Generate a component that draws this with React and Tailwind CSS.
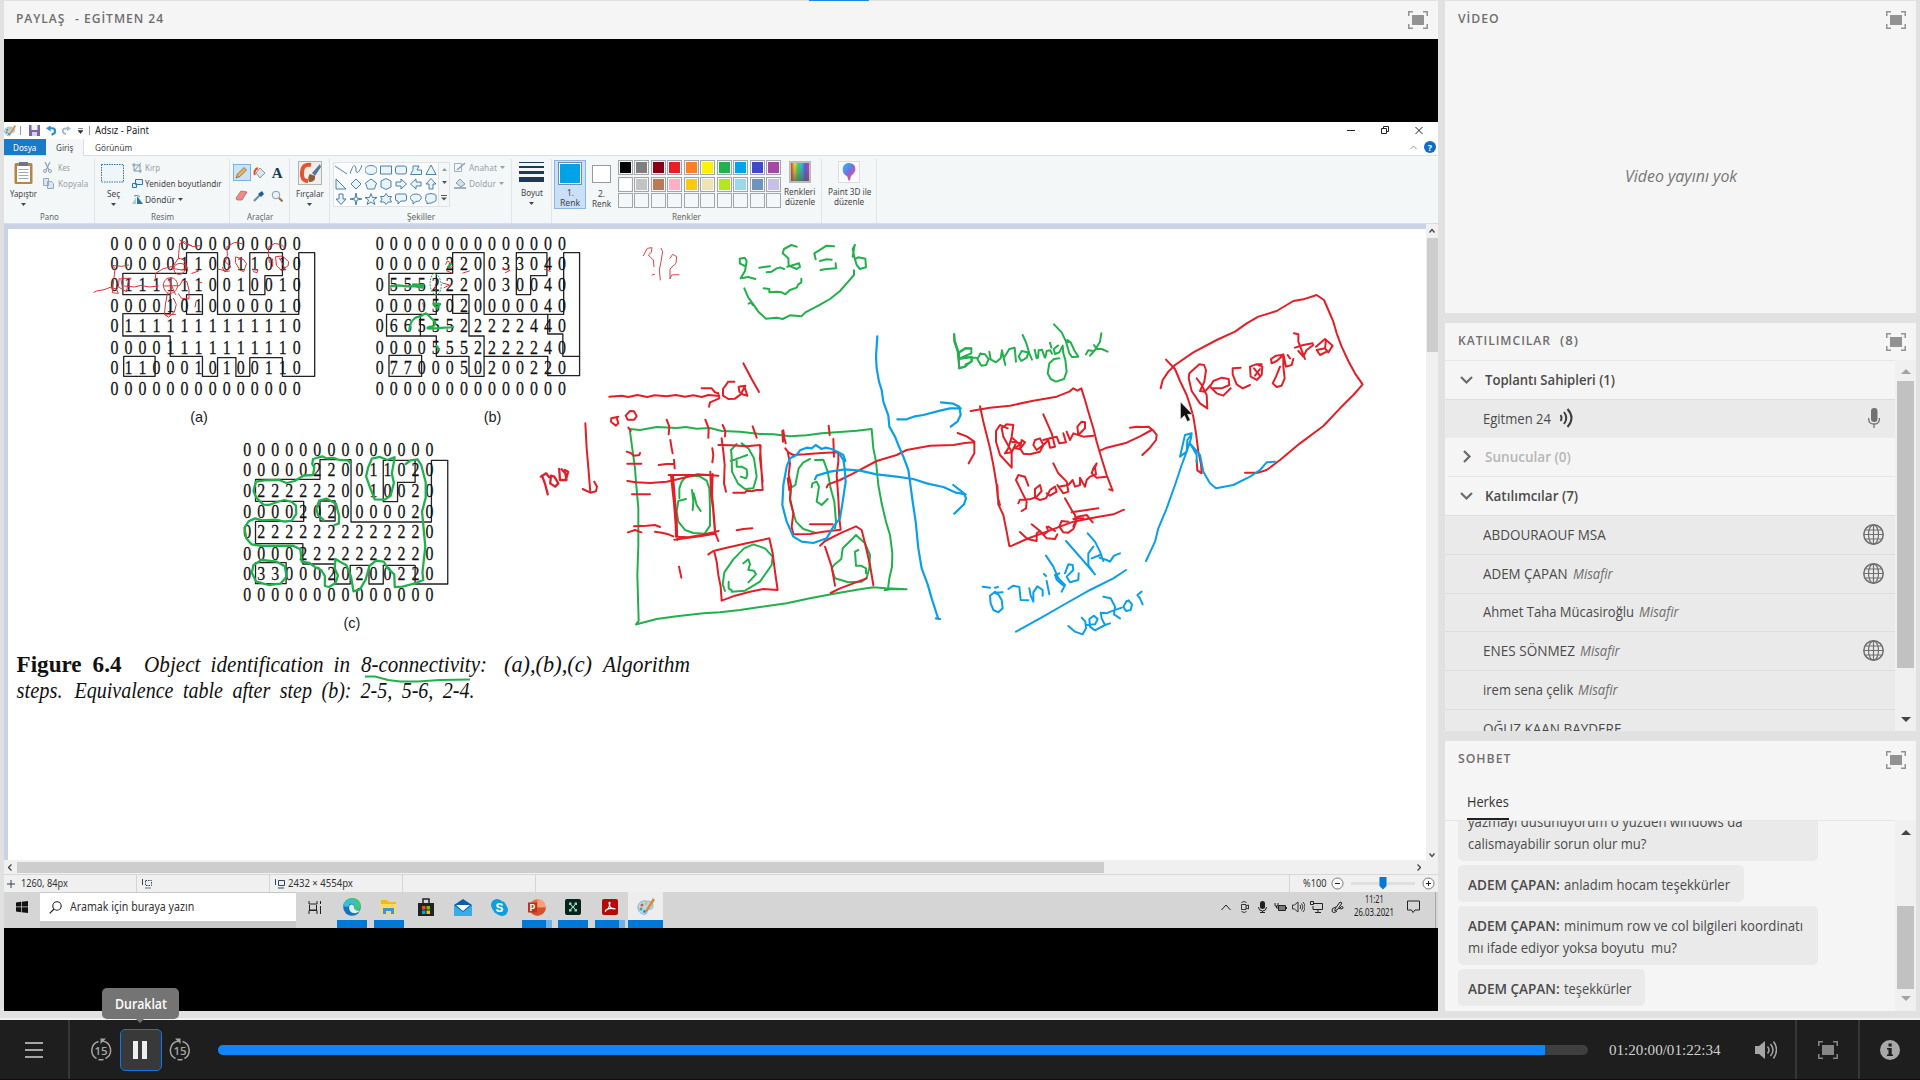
import React, { useLayoutEffect, useRef, useState } from "react";

const RED = "#e41e26";
const GREEN = "#22b04c";
const BLUE = "#0a9fe8";

/* Text set to a fixed measure, condensed or widened horizontally as needed. */
function Fit({ w, className = "", children }) {
  const ref = useRef(null);
  const [scale, setScale] = useState(1);
  useLayoutEffect(() => {
    setScale(w / ref.current.offsetWidth);
  }, [w]);
  return (
    <span className="inline-block shrink-0 text-left whitespace-pre" style={{ width: w }}>
      <span ref={ref} className={"inline-block origin-left " + className} style={{ transform: `scaleX(${scale})` }}>
        {children}
      </span>
    </span>
  );
}

function PodIcon({ className = "text-[#929292]" }) {
  return (
    <svg width="20" height="18" viewBox="0 0 20 18" className={className}>
      <rect x="4" y="4" width="12" height="10" fill="currentColor" />
      <path d="M.75 5V.75H5M15 .75h4.25V5M19.25 13v4.25H15M5 17.25H.75V13" fill="none" stroke="currentColor" strokeWidth="1.5" />
    </svg>
  );
}

/* ---------- Paint ribbon ---------- */

function Caret({ className = "" }) {
  return <svg width="5" height="3" viewBox="0 0 5 3" className={className}><path d="M0 0h5L2.500 3z" fill="currentColor" /></svg>;
}

function Group({ className, label, labelW, children }) {
  return (
    <div className={"flex h-[64px] flex-col items-center justify-between border-r border-[#e2e5e8] " + className}>
      <div className="w-full">{children}</div>
      <div className="h-[13px] text-[9.500px] leading-[14px] text-[#666]">{label && <Fit w={labelW}>{label}</Fit>}</div>
    </div>
  );
}

const shapes = [
  "M0 2 12 10", "M0 10C4 -3 6 2 6 6S9 10 12 1", "M6 1.500C14 1.500 14 10.500 6 10.500S-2 1.500 6 1.500Z", "M.5 2H11.500V10H.5Z",
  "M3 2H9Q11.500 2 11.500 4V8Q11.500 10 9 10H3Q.5 10 .5 8V4Q.5 2 3 2Z", "M3 2H9L7 6 11.500 6V10.500H.5L3 6Z", "M6 1 11 10.500H1Z",
  "M1 1V11H11Z", "M6 1 11 6 6 11 1 6Z", "M6 1 11.500 5 9.500 11H2.500L.5 5Z", "M6 .5 11 3V9L6 11.500 1 9V3Z",
  "M1 4H6V1L11.500 6 6 11V8H1Z", "M11 4H6V1L.5 6 6 11V8H11Z", "M4 11V6H1L6 .5 11 6H8V11Z",
  "M4 1V6H1L6 11.500 11 6H8V1Z", "M6 0 7 5 12 6 7 7 6 12 5 7 0 6 5 5Z", "M6 .5 7.500 4.500H12L8.500 7 10 11.500 6 9 2 11.500 3.500 7 0 4.500H4.500Z",
  "M6 .5 8 3.500H11.500L10 6 11.500 9H8L6 11.500 4 9H.5L2 6 .5 3.500H4Z", "M2 1H10Q11.500 1 11.500 3V6Q11.500 8 10 8H6L3 11V8H2Q.5 8 .5 6V3Q.5 1 2 1Z",
  "M6 1C13 1 13 8.500 6 8.500L3 11V8C-2 6 0 1 6 1Z", "M4 1Q6 0 8 1 12 1 11 5 12 9 8 9 6 11 4 10L2 11V9Q-1 7 1 4 0 1 4 1Z",
];

const palette = [
  "bg-[#000000]", "bg-[#7f7f7f]", "bg-[#880015]", "bg-[#ed1c24]", "bg-[#ff7f27]", "bg-[#fff200]", "bg-[#22b14c]", "bg-[#00a2e8]", "bg-[#3f48cc]", "bg-[#a349a4]",
  "bg-[#ffffff]", "bg-[#c3c3c3]", "bg-[#b97a57]", "bg-[#ffaec9]", "bg-[#ffc90e]", "bg-[#efe4b0]", "bg-[#b5e61d]", "bg-[#99d9ea]", "bg-[#7092be]", "bg-[#c8bfe7]",
  "", "", "", "", "", "", "", "", "", "",
];

function PaletteIcon({ className }) {
  return (
    <svg viewBox="0 0 18 18" className={className}>
      <path d="M9 3C3 2 0 7 1 11s5 6 8 5c2-1 0-3 2-4s5 0 5-4-3-5-7-5Z" fill="#b6d9ec" stroke="#6fa5c3" strokeWidth=".7" />
      <circle cx="5" cy="7" r="1.500" fill="#d65745" /><circle cx="9" cy="5.500" r="1.400" fill="#e7bd3c" /><circle cx="4" cy="11" r="1.500" fill="#52a86a" /><circle cx="7.500" cy="13.500" r="1.400" fill="#4976c8" />
      <path d="M16 0 8 13l2 1L18 2Z" fill="#d98a3a" />
    </svg>
  );
}

function TitleBar() {
  return (
    <div className="flex h-[17px] items-center bg-white">
      <PaletteIcon className="h-[12px] w-[12px]" />
      <i className="ml-[4px] h-[9px] w-px bg-[#999]" />
      <svg className="ml-[8px]" width="11" height="11" viewBox="0 0 11 11"><path d="M0 0h11v11H0z" fill="#7d63a8" /><path d="M2.500 0h6v5h-6z" fill="#f3effa" /><path d="M3 7h5v4H3z" fill="#d8cfe8" /></svg>
      <svg className="ml-[6px]" width="10" height="11" viewBox="0 0 11 11"><path d="M3 3h4q3 0 3 3.200T6 10" fill="none" stroke="#2d8fd6" strokeWidth="2.400" /><path d="M5 0v6.500L0 3z" fill="#2d8fd6" /></svg>
      <svg className="ml-[6px]" width="9" height="11" viewBox="0 0 11 11"><path d="M8 3H4Q1 3 1 6.200T5 10" fill="none" stroke="#a9b7c8" strokeWidth="2.400" /><path d="M6 0v6.500L11 3z" fill="#a9b7c8" /></svg>
      <svg className="ml-[7px] text-[#333]" width="5" height="6" viewBox="0 0 5 6"><path d="M0 .5h5M0 2.500h5L2.500 5.500z" fill="currentColor" stroke="currentColor" strokeWidth=".6" /></svg>
      <i className="ml-[6px] h-[9px] w-px bg-[#999]" />
      <span className="ml-[5px] text-[10.500px] leading-[17px] text-[#222]"><Fit w={54}>Adsız - Paint</Fit></span>
      <div className="ml-auto mr-[15px] flex items-center gap-[26px] text-[#222]">
        <svg width="8" height="9"><path d="M0 4.500h8" stroke="currentColor" /></svg>
        <svg width="8" height="9" viewBox="0 0 8 9"><path d="M.5 2.500h5v5h-5zM2.500 2.500v-2h5v5h-2" fill="none" stroke="currentColor" /></svg>
        <svg width="8" height="9" viewBox="0 0 8 9"><path d="m.5 1 7 7m0-7-7 7" stroke="currentColor" /></svg>
      </div>
    </div>
  );
}

function TabRow() {
  return (
    <div className="flex h-[17px] border-b border-[#dcdfe2] bg-white text-[9.500px] leading-[18px] text-[#444]">
      <div className="w-[42px] bg-[#1979ca] pl-[9px] text-white"><Fit w={23}>Dosya</Fit></div>
      <div className="h-[17px] w-[38px] border-r border-[#dcdfe2] bg-[#f5f6f7] pl-[10px]"><Fit w={17}>Giriş</Fit></div>
      <div className="pl-[11px]"><Fit w={37}>Görünüm</Fit></div>
      <div className="ml-auto mr-[2px] flex items-center gap-[7px]">
        <svg width="7" height="5" viewBox="0 0 7 5"><path d="m.5 4 3-3 3 3" fill="none" stroke="#999" /></svg>
        <span className="flex h-[12px] w-[12px] items-center justify-center rounded-full bg-[#0d6cc4] text-[9px] font-bold leading-none text-white">?</span>
      </div>
    </div>
  );
}

function Ribbon() {
  return (
    <div className="flex h-[68px] border-b border-[#d9dde1] bg-[#f4f7f8] pt-[3px] text-[9.500px] leading-[10px] text-[#444]">
      <Group className="w-[91px]" label="Pano" labelW={19}>
        <div className="flex pl-[6px]">
          <div className="flex w-[27px] flex-col items-center">
            <svg className="mt-[2px]" width="19" height="24" viewBox="0 0 19 24"><rect x=".5" y="2" width="18" height="21" rx="1.500" fill="#b98345" /><path d="M3 5h13v16H3z" fill="#fff" /><path d="M5 1h9v4H5z" fill="#6b7686" /><path d="M4.500 8.500h10m-10 3h10m-10 3h10m-10 3h10" stroke="#9cabb8" /></svg>
            <div className="mt-[4px]"><Fit w={27}>Yapıştır</Fit></div>
            <Caret className="mt-[4px]" />
          </div>
          <div className="ml-[6px] mt-[3px] flex flex-col gap-[5px] text-[#9a9fa5]">
            <div className="flex h-[11px] items-center"><svg width="9" height="11" viewBox="0 0 9 11"><path d="m2 0 4 8M7 0 3 8" stroke="#8fa2b6" strokeWidth="1.200" /><circle cx="2" cy="9" r="1.500" fill="none" stroke="#8fa2b6" /><circle cx="7" cy="9" r="1.500" fill="none" stroke="#8fa2b6" /></svg><span className="ml-[6px]"><Fit w={12}>Kes</Fit></span></div>
            <div className="flex h-[11px] items-center"><svg width="11" height="11" viewBox="0 0 11 11"><path d="M.5.5h5v7h-5zM4.500 3.500h4l2 2v5h-6z" fill="#dde5ee" stroke="#93a9c0" /></svg><span className="ml-[4px]"><Fit w={30}>Kopyala</Fit></span></div>
          </div>
        </div>
      </Group>
      <Group className="w-[135px]" label="Resim" labelW={23}>
        <div className="flex pl-[6px]">
          <div className="flex w-[24px] flex-col items-center">
            <svg className="mt-[5px]" width="24" height="19"><rect x=".5" y=".5" width="22" height="17.500" fill="#eef5fb" stroke="#33709f" strokeDasharray="1.500 1" /></svg>
            <div className="mt-[6px]"><Fit w={13}>Seç</Fit></div>
            <Caret className="mt-[4px]" />
          </div>
          <div className="ml-[7px] mt-[3px] flex flex-col gap-[5px]">
            <div className="flex h-[11px] items-center text-[#9a9fa5]"><svg width="10" height="10" viewBox="0 0 10 10"><path d="M2 0v8h8M0 2h8v8M2 8 9 0" fill="none" stroke="#7f93a8" /></svg><span className="ml-[3px]"><Fit w={15}>Kırp</Fit></span></div>
            <div className="flex h-[11px] items-center"><svg width="11" height="9" viewBox="0 0 11 9"><path d="M3.500.5h7v5h-7zM.5 4.500h4v4h-4z" fill="#dff0fb" stroke="#2c76ae" /></svg><span className="ml-[2px]"><Fit w={77}>Yeniden boyutlandır</Fit></span></div>
            <div className="flex h-[11px] items-center"><svg width="11" height="10" viewBox="0 0 11 10"><path d="M0 9 4 2v7z" fill="#aac8e0" /><path d="M5 9V1l6 8z" fill="#2675b4" /><path d="M2 1q4-2 6 1" fill="none" stroke="#3c8cc8" /></svg><span className="ml-[2px]"><Fit w={30}>Döndür</Fit></span><Caret className="ml-[3px]" /></div>
          </div>
        </div>
      </Group>
      <Group className="w-[60px]" label="Araçlar" labelW={26}>
        <div className="mt-[5px] grid h-[43px] grid-cols-3 grid-rows-2 pl-[3px] pr-[3px]">
          <div className="flex h-[17px] items-center justify-center border border-[#7fb1e3] bg-[#cce2f8]"><svg width="13" height="13" viewBox="0 0 13 13"><path d="m1 12 1.500-4L9 1.500 11.500 4 5 10.500Z" fill="#e9b64d" stroke="#77664a" strokeWidth=".8" /></svg></div>
          <div className="flex h-[17px] items-center justify-center"><svg width="13" height="13" viewBox="0 0 13 13"><path d="m7 2 5 5-5 5-4-5Z" fill="#d9e4ed" stroke="#6e8396" strokeWidth=".8" /><path d="M2 9Q0 4 5 2" fill="none" stroke="#df5425" strokeWidth="2" /></svg></div>
          <div className="flex h-[17px] items-center justify-center font-['Liberation_Serif',serif] text-[15px] font-bold text-[#1c3a5c]">A</div>
          <div className="flex h-[20px] items-center justify-center"><svg width="13" height="11" viewBox="0 0 13 11"><path d="m1 8 5-7 6 1-5 8H2Z" fill="#e98c8c" stroke="#bd6161" strokeWidth=".8" /></svg></div>
          <div className="flex h-[20px] items-center justify-center"><svg width="12" height="12" viewBox="0 0 12 12"><path d="m1 11 6-6" stroke="#668aa8" strokeWidth="2" /><path d="m5 4 3 3 3-3-2-3Z" fill="#205c99" /></svg></div>
          <div className="flex h-[20px] items-center justify-center"><svg width="12" height="12" viewBox="0 0 12 12"><circle cx="5" cy="5" r="3.800" fill="#e8f2f8" stroke="#8699a8" /><path d="m8 8 3.500 3.500" stroke="#a16e43" strokeWidth="2" /></svg></div>
        </div>
      </Group>
      <Group className="w-[40px]">
        <div className="flex flex-col items-center">
          <svg className="mt-[2px]" width="24" height="24" viewBox="0 0 24 24"><rect x=".5" y=".5" width="23" height="23" fill="#f0efee" stroke="#b3b3b3" /><path d="M13 4Q5 2 4 11t6 9" fill="none" stroke="#e6532a" strokeWidth="4" /><path d="m22 3-8 9 3 3 6-9" fill="#52789b" /><path d="M12 13q-3 3-1 8 7 0 6-6Z" fill="#8c5e39" /></svg>
          <div className="mt-[4px]"><Fit w={28}>Fırçalar</Fit></div>
          <Caret className="mt-[4px]" />
        </div>
      </Group>
      <Group className="w-[182px]" label="Şekiller" labelW={28}>
        <div className="flex pl-[3px] pt-[3px]">
          <div className="grid h-[45px] w-[106px] grid-cols-7 place-items-center border border-[#dfe3e8] bg-[#fafcfd]">
            {shapes.map((d, i) => (
              <svg key={i} width="12" height="12" viewBox="0 0 12 12"><path d={d} fill={i < 2 ? "none" : "#eaf4fb"} stroke="#3a73a0" strokeWidth=".9" /></svg>
            ))}
          </div>
          <div className="flex w-[11px] flex-col items-center justify-around border border-l-0 border-[#dfe3e8] text-[#555]">
            <Caret className="rotate-180 text-[#999]" /><Caret /><svg width="6" height="6" viewBox="0 0 6 6"><path d="M0 .5h6" stroke="currentColor" /><path d="M0 2.500h6l-3 3z" fill="currentColor" /></svg>
          </div>
          <div className="ml-[4px] flex flex-col gap-[5px] text-[#9a9fa5]">
            <div className="flex h-[11px] items-center"><svg width="12" height="11" viewBox="0 0 12 11"><path d="M.5 1.500h7v8h-7z" fill="none" stroke="#9eb0c1" /><path d="m3 8 8-7" stroke="#8ba0b5" strokeWidth="1.500" /></svg><span className="ml-[3px]"><Fit w={28}>Anahat</Fit></span><Caret className="ml-[3px]" /></div>
            <div className="flex h-[11px] items-center"><svg width="12" height="11" viewBox="0 0 12 11"><path d="m6 1 5 5-4 3-5-4Z" fill="#d3dfe9" stroke="#8299b0" /><path d="M0 10h12" stroke="#9cb0c4" strokeWidth="2" /></svg><span className="ml-[3px]"><Fit w={27}>Doldur</Fit></span><Caret className="ml-[3px]" /></div>
          </div>
        </div>
      </Group>
      <Group className="w-[40px]">
        <div className="flex flex-col items-center">
          <svg className="mt-[3px]" width="25" height="21"><path d="M0 .5h25" stroke="#1d3a59" /><path d="M0 5h25" stroke="#1d3a59" strokeWidth="2" /><path d="M0 10.500h25" stroke="#1d3a59" strokeWidth="3" /><path d="M0 17.500h25" stroke="#1d3a59" strokeWidth="5" /></svg>
          <div className="mt-[5px]"><Fit w={22}>Boyut</Fit></div>
          <Caret className="mt-[4px]" />
        </div>
      </Group>
      <Group className="w-[270px]" label="Renkler" labelW={29}>
        <div className="flex pl-[2px] pt-[1px] text-center">
          <div className="flex h-[49px] w-[32px] flex-col items-center border border-[#8ab6e4] bg-[#c9e0f7]">
            <div className="mt-[1px] h-[24px] w-[24px] border border-[#7b8d9c] bg-[#00a2e8] ring-1 ring-inset ring-white" />
            <div className="mt-[3px]"><Fit w={7}>1.</Fit></div><Fit w={20}>Renk</Fit>
          </div>
          <div className="flex w-[30px] flex-col items-center">
            <div className="mt-[5px] h-[18px] w-[19px] border border-[#999] bg-white" />
            <div className="mt-[6px]"><Fit w={7}>2.</Fit></div><Fit w={19}>Renk</Fit>
          </div>
          <div className="ml-[2px] grid h-[48px] w-[163px] grid-cols-10 gap-x-[1.500px] gap-y-[1.500px]">
            {palette.map((c, i) => (
              <div key={i} className="h-[15px] border border-[#a2a6aa] p-[1px]"><div className={"h-full w-full " + c} /></div>
            ))}
          </div>
          <div className="ml-[2px] flex w-[33px] flex-col items-center">
            <svg className="mt-[1px]" width="22" height="22" viewBox="0 0 22 22">
              <defs><linearGradient id="rb"><stop offset="0" stopColor="#e33" /><stop offset=".2" stopColor="#ed3" /><stop offset=".4" stopColor="#3d5" /><stop offset=".6" stopColor="#3bd" /><stop offset=".8" stopColor="#55e" /><stop offset="1" stopColor="#e3a" /></linearGradient><linearGradient id="dk" x2="0" y2="1"><stop offset="0" stopColor="#666" stopOpacity="0" /><stop offset="1" stopColor="#555" stopOpacity=".7" /></linearGradient></defs>
              <rect width="22" height="22" fill="#bbb" /><rect x="2" y="2" width="18" height="18" fill="url(#rb)" /><rect x="2" y="2" width="18" height="18" fill="url(#dk)" />
            </svg>
            <div className="mt-[4px]"><Fit w={31}>Renkleri</Fit></div><Fit w={30}>düzenle</Fit>
          </div>
        </div>
      </Group>
      <Group className="w-[55px]">
        <div className="flex flex-col items-center pt-[2px]">
          <svg width="22" height="22" viewBox="0 0 22 22">
            <defs><linearGradient id="p3" x1="0" x2="1" y2="1"><stop offset="0" stopColor="#24c6f4" /><stop offset=".45" stopColor="#6976e4" /><stop offset=".75" stopColor="#e14b9c" /><stop offset="1" stopColor="#ffb42c" /></linearGradient></defs>
            <rect x=".5" y=".5" width="21" height="21" fill="#fbfbfb" stroke="#ddd" /><path d="M11 2c8 0 8 9 3 12-2 1-1 5-3 6-1-1-1-3-2-5-6-2-6-13 2-13Z" fill="url(#p3)" />
          </svg>
          <div className="mt-[4px]"><Fit w={43}>Paint 3D ile</Fit></div><Fit w={30}>düzenle</Fit>
        </div>
      </Group>
    </div>
  );
}

/* ---------- Drawing canvas ---------- */

const Z = "00000000000000";
const gridA = [Z, "00000110011010", "01111110010010", "00001010000010", "01111111111110", "00001111111110", "01100010100110", Z];
const gridB = [Z, "00000220033040", "05552220030040", "00005020000040", "06655522222440", "00005552222240", "07700050200220", Z];
const gridC = [Z, "00000220011020", "02222220010020", "00002020000020", "02222222222220", "00002222222220", "03300020200220", Z];
const rowOffsets = [0, 20.7, 41.6, 62.4, 82.500, 103.900, 124.500, 145.300];

function Digits({ rows, x, y }) {
  return rows.map((row, r) =>
    row.split("").map((ch, c) => (
      <text key={r + "-" + c} transform={`translate(${x + c * 14.03} ${y + rowOffsets[r]}) scale(.86 1)`} textAnchor="middle">{ch}</text>
    ))
  );
}

const outlines = [
  "M301 145H457V83H533V268H732V83H771V454H692V398H612V454H578V398H533V454H496V394H417V333H301V266H417V209H301Z",
  "M303 394H380V454H303ZM457 209H496V268H457ZM612 83H692V152H649V209H612Z",
  "M953 145H1109V83H1186V268H1381V83H1420V452H1342V394H1186V454H1149V394H1069V333H947V268H1069V209H953Z",
  "M1069 145V209H1149V333H1186V394M1109 209V265H1149M1030 268V333M1342 268V327H1379V394H1420M1265 83H1340V152H1300V209H1265ZM953 391H1033V454H953Z",
  "M626 763H784V704H860V891H1057V706H1097V1077H1017V1021H939V1077H904V1021H858V1077H820V1017H742V956H626V889H744V829H626Z",
  "M626 1013H701V1076H626ZM784 828H821V888H784ZM939 706H1017V772H974V830H939Z",
];

const leftThinRed = [
  "M230 202 237 198 255 194 270 187 285 192 290 205 275 203 282 130 274 121 298 124 315 120",
  "M292 160 290 186 310 200 314 170 321 160 296 160 300 190 M305 183 330 186 345 181 365 186 388 183M384 182 384 190M380 168 382 144 400 131 424 124 437 100 440 56 452 50 472 65 488 62",
  "M437 100C455 100 462 120 450 142 436 158 420 140 428 122 435 112 458 110 460 138M440 45 455 58 470 62M422 130 446 135 460 128",
  "M400 180C402 150 436 150 435 184 430 212 402 214 400 180M418 158V212M402 183 440 182 448 165 458 170 463 195 463 222 445 220 437 206M412 160 430 208M410 206 405 240 403 268 413 277 427 262 432 238 425 220M405 270 430 268",
  "M470 145 487 138 482 135M486 175 494 172M480 232 478 246",
  "M533 132 555 138 566 125 552 111 557 90 556 65 575 52 592 56M578 96 596 103 604 116 597 140 588 135 577 113ZM545 127 550 140 562 138",
  "M620 132 632 136 630 143 621 140M660 112 657 85 659 65 674 55 690 60 698 70M676 95 692 93 707 110 706 122 690 136 678 122ZM685 100 698 130M668 102 668 124",
  "M1092 118 1096 108 1102 112 1098 129 1110 124M1094 137 1108 145M1134 144 1150 138M1084 174 1101 180 1088 188M1067 178 1068 198M1036 234 1038 247M1232 130 1250 136 1238 143M1334 133 1348 139",
];
const leftGreen = [
  "M956 184 976 181 996 184 1014 183 1035 188 1037 180 1012 178M1062 236 1078 237 1071 250 1063 240M1098 126 1105 117M1070 363 1076 374",
  "M1003 316C1004 294 1009 286 1018 278 1028 276 1035 272 1043 265 1051 268 1054 281 1065 288 1070 299 1061 306 1051 306 1040 313 1056 310 1070 310 1085 306 1096 310 1110 306",
  "M859 716 853 706 832 705 818 699 799 700 789 694 767 702 765 717 770 728 767 750 743 752 722 768 702 774 684 765 648 766 627 770 621 798 628 818 645 839 659 840 679 831 697 825 715 831 725 842 726 866 715 887 697 890 675 884 642 886 625 880 609 889 599 908 603 939 616 958 643 963 717 962 736 973 739 1010 758 1014 773 1027 787 1035 796 1053 796 1083 806 1086 822 1074 828 1052 820 1030 822 1002 833 1010 849 1021 860 1054 866 1099 882 1093 896 1063 905 1023 921 1007 940 1010 951 1031 966 1048 967 1086 986 1085 1017 1075 1037 1065 1035 1042 1042 965 1034 860 1043 818 1043 772 1032 720 1023 703 1006 706 994 717",
  "M966 697 949 705 931 696 911 701 902 727 897 754 906 786 918 823 942 824 957 812 965 774 960 745 967 697M819 900 830 896 831 873 823 836 801 821 782 827 775 850 779 870 793 885",
  "M641 1005 621 1020 617 1043 627 1069 658 1080 687 1076 702 1055 698 1024 678 1010Z",
];

/* Strokes in the middle of the sheet. */
const midRed = [
  "M148 515 185 512 205 516 232 510 262 516 284 511 320 514 348 510 375 515 400 511 425 516 445 510 478 513M425 490 455 490 465 502 475 505 478 520 450 532 447 545",
  "M523 470 505 470 489 492 489 512 505 522 525 521 542 508 556 482 536 485 538 500 548 508 562 512 555 490M550 415 575 462 597 501",
  "M175 575 154 580 153 590 168 602 175 595 170 578M210 558 197 572 203 584 223 584 230 573 222 559Z",
  "M76 595 80 670 86 740 91 802M68 792 91 803 108 799 111 785 103 770",
  "M205 608 212 618M320 584 328 605 326 628M436 584 446 610 445 638M488 600 496 618 495 634M578 604 590 638M670 616 673 638 677 655M667 618 669 650M806 602 809 630",
  "M200 680 212 684 222 692 238 690 240 684M202 716H244M202 768 228 772 270 774 320 770 385 755 412 748 475 752M216 808H270M222 904 260 902 285 900 300 906M204 922 225 915 244 922M285 920 305 923 325 928 340 934",
  "M331 645 335 670 338 685M342 704 344 730M296 720 320 717 342 716M457 670 460 690 457 712M357 1025 364 1058M530 916 550 912 577 910",
  "M326 750 445 750M339 752 347 850 350 890 352 945M333 752 342 835 347 900 348 935 385 937 425 930 476 918M343 944 380 939 430 932 464 926M451 740 452 770 453 810 459 850 465 925M458 747 456 810 460 850 466 925 475 948",
  "M475 660 515 661 560 664 600 660 608 795 590 795 575 799 560 797 555 803 520 803M485 640 490 680 494 720 492 775 498 800M602 662 600 700 608 770",
  "M676 670 685 682 700 690 735 688 785 684 835 682 835 710 830 750 835 820 838 880 842 914 790 920 750 927 700 928 695 905 700 865 690 820 693 780 686 750 690 715 683 680M820 642 822 695M683 760 688 795M750 898H818",
  "M445 988 460 978 500 968 560 955 628 940 638 985 645 1040 653 1095 610 1092 570 1100 525 1112 485 1127 482 1085 475 1050 470 1010 463 980",
  "M780 962 795 948 840 925 888 904 905 915 915 955 930 1020 940 1080M795 965 815 1025 825 1082M812 1104 840 1090 920 1060",
  "M800 787 805 778 840 765 880 745 950 708 1010 690 1040 675 1110 662 1180 660 1215 654 1240 652M1193 624 1220 634 1243 650 1243 685 1226 715",
];
const midGreen = [
  "M555 123 540 116 539 101 554 98 560 108 555 138 542 160 565 156 586 162M598 128 630 124M620 142 635 140 650 130 660 127 672 132",
  "M710 65 694 60 672 72 668 85 685 100 686 122 710 132 720 126 717 115 700 120 682 125M822 64 800 62 763 85 767 103M780 108 800 103 815 104M782 135 800 132 828 130 827 115M885 60 878 72 884 100 890 120 900 132 918 127 916 101 895 97 885 102M884 60 878 95",
  "M611 190 628 192 628 202 650 200 665 202 676 208 690 195 710 188 715 178 724 172 724 161M553 190 565 218 580 238 595 260 618 281 650 278 668 282 690 271 724 274 736 262 775 242 810 222 840 198 860 175 882 150V136M566 236 574 232 578 240",
  "M210 612 240 615 290 606 350 609 378 606 410 611 450 609 485 618 540 620 600 627 640 628 690 634 740 631 785 625 850 620 890 617 935 612 940 670 948 710 955 780 965 835 978 890 990 930 997 985 996 1025 988 1060 984 1092M974 1096 990 1093 1040 1093 978 1090 940 1087 900 1093 830 1105 750 1120 680 1135 600 1146 540 1155 480 1162 430 1165 350 1174 290 1182 230 1198M228 1198 236 1188 232 1050 235 960 235 850 228 770 225 730 210 620",
  "M382 750 365 770 358 790 358 820M378 822 355 828 350 860 355 890 375 915 400 924 434 926 450 902 450 850 448 790 440 767 415 752 382 753M396 795 400 830 398 855M401 805 410 840 422 858",
  "M530 657 513 675 515 695 516 740 534 776 555 792 580 790 590 755 582 700 565 670 545 655M525 704 512 707M530 708 530 725 545 725 560 733 562 750 558 760 542 755M528 702 540 698 562 690",
  "M750 702 730 712 716 730 706 780 693 788 690 828 708 890 730 912 765 923M765 705 790 704 803 740 812 790 823 830 828 890 825 910M755 787 757 775 770 770 777 785 770 830 785 840 803 822",
  "M515 1100 555 1097 600 1070 635 1020 638 995 615 970 580 958 552 970 520 1003 493 1042 488 1078 495 1098M506 1070 506 1090 515 1096M550 1015 565 1003 570 1017 565 1035 582 1037 588 1048 565 1072",
  "M888 930 876 943 848 970 844 1002 822 1020 815 1030 825 1060 865 1072 905 1070 920 1058 928 1030 930 990 915 955 888 930M895 975 885 980 888 1022 903 1022 918 1030 918 1045",
  "M1182 328 1183 350 1193 380 1198 430 1215 425 1217 418 1235 410 1235 396 1198 402 1197 382 1217 370 1234 370",
];
const midBlue = [
  "M952 334 948 395 950 430 957 470 965 495 970 530 985 572 988 605 1005 635 1017 665 1030 695 1045 735 1050 770 1058 830 1067 890 1075 970 1085 1030 1103 1078 1115 1120 1135 1182M1128 1180 1140 1182",
  "M1012 583H1040L1065 574 1090 570 1140 557 1170 550 1202 550M1143 532 1180 536 1198 545 1202 570 1192 590 1172 605",
  "M765 763 770 752 810 740 855 733 900 737 950 748 1010 755 1060 762 1100 775 1150 786 1185 802 1217 808M1180 780 1212 805 1218 820 1212 838 1183 866",
  "M856 708 850 690 835 682 815 672 797 668 785 672 767 660 755 670 740 668 720 676 710 690 690 700 680 725 670 780 667 840 680 890 700 935 725 950 760 954 800 940 820 905 840 880 848 830 857 770 854 730 850 705 840 690",
];

/* Strokes on the right part of the sheet. */
const rightGreen = [
  "M43 328 44 345 55 380 58 430 75 425 95 408 94 396 60 400M58 382 75 370 94 371 94 385 75 393 60 400M95 398 108 398M122 385 112 402 124 422 138 420 146 402 135 388 120 386M148 380 152 403 168 412 182 400 186 376 190 395 196 420M192 398 208 372 224 368 228 410",
  "M262 382 245 378 236 395 244 408 260 398 266 380M248 330 258 352 268 385 276 404M284 374 290 400M294 398 296 376 306 374 314 397M316 398 320 378 331 376 336 386M330 353 334 368",
  "M354 362 341 372 345 387 358 382 368 362 370 385 376 405 380 440 372 462 348 470 332 462 323 445 328 415 342 402 358 400",
  "M342 298 365 322 378 350 388 385 396 396M385 352 382 345 392 352 404 378 415 395 396 396M438 388 445 376 460 378M462 360 470 372 485 372 503 380M484 325 480 350 465 375 450 392",
];
const rightRed = [
  "M92 558 150 548 210 542 280 527 350 515 388 500 400 490 412 497 424 490 435 525 445 560 460 610 470 650 480 685 500 750 518 797 508 793M120 544 130 590 150 670 160 720 170 780 173 815 180 840M172 780 175 838 190 870 200 920 208 963 216 962 260 942 320 920 400 890 460 878 520 868 552 854",
  "M203 610 180 600 168 618 168 650 180 690 215 728 215 680 190 635 185 610 200 598 220 600 215 635 205 670 195 685 215 682 230 650 218 640M215 650 243 655 225 670 240 672 255 652 245 645 240 670 250 686 270 688 300 680 310 660 300 640 285 645 280 660 290 675 310 660 325 645 330 668 345 665 335 625 310 568M310 645 330 640 350 635M350 635 358 655 378 652 370 625M380 620 390 645 400 625 415 630 435 610 435 592 425 590 412 605 415 630 430 635 460 632",
  "M265 782 255 755 235 750 228 765 245 800 260 830 258 850 245 858M235 835 240 824 270 823 290 815 305 798 300 780 285 792 285 818 300 825 318 820 330 795 345 785 350 800 330 812 320 805M340 715 355 745 380 770 385 800 370 805 352 780M355 785 385 780 398 765 405 785 420 780 420 758 435 785 440 765 450 755 468 748 465 728 470 715 460 730 455 745 470 758 500 755",
  "M240 921 262 942 290 948 290 925 300 918M275 898 300 918 320 940 345 942 352 928M320 905 325 918 310 930M325 905 345 918M385 890 365 888 358 905 370 922 385 923 400 912 408 892 405 870 395 855 375 820M400 905 412 875 440 870 458 892M400 882 430 880M395 862 440 855 475 850",
  "M480 677 500 668 560 653 600 634 635 615M570 608 590 605 605 606 625 605 638 615 650 630 648 645 630 668 607 690",
  "M662 490 668 465 685 440 705 420 760 382 830 345 885 320 920 295 955 275 1010 258 1060 228 1090 223 1130 210 1152 225 1165 255 1180 290 1190 325 1205 365 1225 408 1245 445 1268 478 1240 510 1200 550 1150 603 1080 655 1020 705 980 735 955 743 915 743",
  "M678 404 705 432 720 468 740 510 750 540 760 575 768 625 775 680 783 718 785 745 772 736 770 705",
  "M792 420 778 418 748 445 746 460 755 498 780 535 802 550 800 510 785 480 770 460M792 420 798 435 793 470 780 498 795 500 812 480M818 490 845 490 868 480 866 462 845 458 820 468 810 485 830 505 850 512 872 490M902 428 878 430 878 448 890 478 908 490 930 480M965 418 948 418 930 425 932 455 950 465 965 450 967 425 950 418M942 430 958 450M945 452 960 432",
  "M1025 390 1008 392 993 402 995 415 1010 408 1030 390 1030 425 1034 460 1025 482 1010 486 998 475 1008 455 1020 425M1030 388 1038 425 1055 420 1060 402M1043 390 1050 400M1062 325 1075 328 1075 350 1095 402M1065 368 1090 360 1118 355M1075 378 1090 395 1100 375 1120 360M1128 365 1140 355 1155 342 1178 362 1165 382 1155 370 1130 375 1140 390 1160 380M1158 345 1155 370",
];
const rightBlue = [
  "M618 1008 645 950 655 910 680 850 705 780 725 720 740 680 753 640 755 625 735 630 720 695 740 680 742 645 753 630M750 655 770 690 770 712M750 655 780 690 790 740 810 775 828 790 880 780 930 755 960 735 980 712 1005 710",
  "M128 1085 150 1088M165 1088 174 1086M165 1100 150 1112 152 1135 160 1155 175 1162 188 1150 185 1125 175 1108 162 1103 188 1102M205 1092 220 1082 238 1086 242 1125 265 1126M268 1090 272 1112 280 1130 280 1102 292 1084 308 1095 308 1112M320 1068 328 1108M312 1047 318 1053M318 992 340 1025 355 1060 375 1080 365 1100M358 1045 345 1050 350 1064 368 1080M375 1045 385 1018 398 1020 400 1035 380 1055 390 1072 415 1065 416 1045",
  "M378 948 415 990 445 1025 465 1048M460 965 445 985 445 1020 462 1045M443 925 465 950 480 980 490 1008M455 1000 480 990M478 998 500 1005 510 1010 522 992 540 985",
  "M228 1220 300 1180 370 1140 450 1095 520 1060 558 1035",
  "M385 1203 405 1220 428 1228 438 1210 436 1190 425 1178M440 1200 465 1198 473 1182 462 1172 448 1182 450 1205 465 1216 495 1200M502 1165 482 1163 485 1180 495 1200 510 1195M490 1115 512 1120 525 1145 522 1168 540 1180M505 1162 545 1148M560 1128 550 1145 558 1158 572 1155 576 1138 566 1126 558 1130M605 1100 592 1110 600 1120 608 1138",
];

function Ink({ paths, color, width = 2 }) {
  return paths.map((d, i) => (
    <path key={i} d={d} fill="none" stroke={color} strokeWidth={width} strokeLinecap="round" strokeLinejoin="round" vectorEffect="non-scaling-stroke" />
  ));
}

const caption = [
  [16.500, 672, 105, "Figure 6.4", true], [144, 672, 206, "Object identification in"], [361, 672, 126, "8-connectivity:"],
  [504, 672, 88, "(a),(b),(c)"], [603, 672, 87, "Algorithm"], [16.500, 698, 46, "steps."],
  [74.500, 698, 277, "Equivalence table after step (b):"], [360.500, 698, 114, "2-5, 5-6, 2-4."],
];

function Canvas() {
  return (
    <svg viewBox="8 229 1418 631" className="h-[631px] w-[1418px] bg-white">
      <g transform="translate(0 225) scale(.40816 .33333)"><Ink paths={outlines} color="#222" width={1.300} /></g>
      <g fontFamily="'Liberation Serif', serif" fontSize="18.500" fill="#111" stroke="#111" strokeWidth=".25">
        <Digits rows={gridA} x={114.400} y={249.600} />
        <Digits rows={gridB} x={379.700} y={249.600} />
        <Digits rows={gridC} x={247.200} y={455.600} />
      </g>
      <g fontFamily="'Liberation Sans', sans-serif" fontSize="14.500" fill="#222" textAnchor="middle">
        <text x="199" y="421.500">(a)</text><text x="492.500" y="421.500">(b)</text><text x="352" y="627.500">(c)</text>
      </g>
      <g fontFamily="'Liberation Serif', serif" fontSize="22.500" wordSpacing="5" fill="#111">
        {caption.map(([x, y, w, t, bold]) => (
          <text key={t} x={x} y={y} textLength={w} lengthAdjust="spacingAndGlyphs" fontStyle={bold ? "normal" : "italic"} fontWeight={bold ? "700" : "400"}>{t}</text>
        ))}
      </g>
      <path d="M365 676.500H375L388 680 400 681.500H418L440 680 470 679.500" fill="none" stroke={GREEN} strokeWidth="2" />
      <g transform="translate(0 225) scale(.40816 .33333)">
        <Ink paths={leftThinRed} color="#dc3138" width={1} />
        <Ink paths={leftGreen} color={GREEN} width={2.300} />
        <path d="M1063 145C1048 160 1052 205 1068 210 1088 205 1084 150 1063 145Z" fill="none" stroke={GREEN} strokeWidth="1" vectorEffect="non-scaling-stroke" strokeDasharray="2 1" />
        <Ink paths={["M1328 752 1335 775 1342 808M1325 755 1338 745 1345 756M1350 752 1348 775 1360 785 1368 775 1358 755 1350 752M1370 732 1372 765 1388 765 1385 745 1376 733M1384 735 1392 740 1388 758"]} color={RED} width={2.300} />
      </g>
      <g transform="translate(560 225) scale(.33333)">
        <Ink paths={["M250 92 262 70 276 68 274 82 265 90 280 105 282 125M276 150 284 148M303 70 308 80 303 110 298 135 301 165M330 100 338 88 350 95 348 115 330 132 330 162 335 150 357 149"]} color="#d6454b" width={1} />
        <Ink paths={midGreen} color={GREEN} /><Ink paths={midRed} color={RED} /><Ink paths={midBlue} color={BLUE} width={2.200} />
      </g>
      <g transform="translate(940 225) scale(.33333)">
        <Ink paths={rightGreen} color={GREEN} /><Ink paths={rightRed} color={RED} /><Ink paths={rightBlue} color={BLUE} />
      </g>
      <path d="M1180.500 402v17l4-3.500 2.800 6 3-1.400-2.800-5.800h5z" fill="#111" stroke="#ddd" strokeWidth=".6" />
    </svg>
  );
}

function StatusBar() {
  return (
    <div className="flex h-[18px] items-center border-t border-[#d8d8d8] bg-[#f0f0f0] text-[10px] leading-[17px] text-[#333]">
      <div className="flex h-full w-[133px] items-center border-r border-[#d5d5d5]"><svg className="ml-[3px]" width="8" height="8" viewBox="0 0 8 8"><path d="M4 0v8M0 4h8" stroke="#345" /></svg><span className="ml-[6px]"><Fit w={47}>1260, 84px</Fit></span></div>
      <div className="flex h-full w-[133px] items-center border-r border-[#d5d5d5]"><svg className="ml-[4px]" width="11" height="10" viewBox="0 0 11 10"><path d="M1.500 0v6" stroke="#345" /><path d="M4.500 1.500h6v5h-6z" fill="none" stroke="#345" strokeDasharray="1.500 1" /><path d="M4 9h6" stroke="#678" /></svg></div>
      <div className="flex h-full w-[133px] items-center border-r border-[#d5d5d5]"><svg className="ml-[4px]" width="11" height="10" viewBox="0 0 11 10"><path d="M1.500 0v6M4 9h6" stroke="#345" /><path d="M4.500 1.500h6v5h-6z" fill="none" stroke="#345" /></svg><span className="ml-[3px]"><Fit w={65}>2432 × 4554px</Fit></span></div>
      <div className="h-full w-[133px] border-r border-[#d5d5d5]" />
      <div className="ml-auto flex h-full w-[149px] items-center border-l border-[#d5d5d5] pl-[13px]">
        <Fit w={23}>%100</Fit>
        <svg className="ml-[5px]" width="13" height="13" viewBox="0 0 13 13"><circle cx="6.500" cy="6.500" r="5.500" fill="#fff" stroke="#777" /><path d="M4 6.500h5" stroke="#222" /></svg>
        <svg className="ml-[7px]" width="64" height="13" viewBox="0 0 64 13"><path d="M0 5h64v3H0z" fill="#dfdfdf" /><path d="M28.500 0h7v9L32 12.500 28.500 9z" fill="#0078d7" /></svg>
        <svg className="ml-[7px]" width="13" height="13" viewBox="0 0 13 13"><circle cx="6.500" cy="6.500" r="5.500" fill="#fff" stroke="#777" /><path d="M4 6.500h5M6.500 4v5" stroke="#222" /></svg>
      </div>
    </div>
  );
}

function Task({ className = "", bar = "", children }) {
  return (
    <div className={"flex h-[36px] flex-col items-center justify-between " + className}>
      <div className="flex h-[28px] items-center justify-center pt-[2px]">{children}</div>
      <div className={"h-[8px] " + bar} />
    </div>
  );
}

function Taskbar() {
  return (
    <div className="flex h-[36px] bg-[#d5d5d5]">
      <div className="flex w-[36px] justify-center pt-[9px]"><svg width="12" height="12" viewBox="0 0 12 12"><path d="m0 1.500 5-.7v4.800H0zM5.700.7 12 0v5.600H5.700zM0 6.300h5v4.900l-5-.7zM5.700 6.300H12V12l-6.300-.8z" fill="#111" /></svg></div>
      <div className="w-[256px] bg-[#c8c8c8] pt-px">
        <div className="flex h-[28px] items-center bg-white text-[12px] text-[#333]">
          <svg className="ml-[9px]" width="13" height="13" viewBox="0 0 13 13"><circle cx="8" cy="5" r="4.200" fill="none" stroke="#222" strokeWidth="1.100" /><path d="M5 8 .7 12.300" stroke="#222" strokeWidth="1.200" /></svg>
          <span className="ml-[8px]"><Fit w={124}>Aramak için buraya yazın</Fit></span>
        </div>
      </div>
      <Task className="w-[37px]"><svg width="14" height="13" viewBox="0 0 14 13"><path d="M1 0v3M9 0v3M1 3h8M1 9.500h8M1 13V9.500M9 13V9.500M1.500 4v5h7V4M12.500 0v3M12.500 5v8" fill="none" stroke="#222" /></svg></Task>
      <Task className="w-[37px]" bar="w-[30px] bg-[#0078d7]"><svg width="18" height="18" viewBox="0 0 18 18"><circle cx="9" cy="9" r="8.800" fill="#1473bd" /><path d="M0 8C2-2 17-3 18 8c0 5-6 5-7 3 2-6-5-8-11-3Z" fill="#41c77b" /><path d="M0 8c3-8 13-8 14-1-4-3-8-2-9 2Z" fill="#37bce6" /><path d="M6 10c0-5 6-4 5 0 1 3 4 3 6 2-2 4-10 5-11-2Z" fill="#dff2f7" /></svg></Task>
      <Task className="w-[37px]" bar="w-[30px] bg-[#0078d7]"><svg width="17" height="16" viewBox="0 0 17 16"><path d="M1 1h6l2 2h7v11H1z" fill="#f4b81d" /><path d="M1 5h15v10H1z" fill="#ffd95c" /><path d="M3 15V9h11v6h-3v-3H6v3z" fill="#3e94d6" /></svg></Task>
      <Task className="w-[37px]"><svg width="18" height="18" viewBox="0 0 18 18"><path d="M6 5V1h6v4" fill="none" stroke="#222" strokeWidth="1.500" /><path d="M1 5h16v13H1z" fill="#222" /><path d="M5 8h3.500v3.500H5z" fill="#f25022" /><path d="M9.500 8H13v3.500H9.500z" fill="#7fba00" /><path d="M5 12.500h3.500V16H5z" fill="#00a4ef" /><path d="M9.500 12.500H13V16H9.500z" fill="#ffb900" /></svg></Task>
      <Task className="w-[37px]"><svg width="18" height="17" viewBox="0 0 18 17"><path d="m0 6 9-6 9 6v10H0z" fill="#0a5fa8" /><path d="m2 6 14 0-7 6z" fill="#fff" /><path d="m0 6 9 7 9-7v11H0z" fill="#35aee8" /></svg></Task>
      <Task className="w-[37px]"><svg width="17" height="17" viewBox="0 0 17 17"><circle cx="6" cy="6" r="6" fill="#0b9fdf" /><circle cx="11" cy="11" r="6" fill="#0b9fdf" /><circle cx="8.500" cy="8.500" r="7" fill="#0b9fdf" /><text x="8.500" y="12.700" textAnchor="middle" fontFamily="Inter, sans-serif" fontSize="12" fontWeight="700" fill="#fff">S</text></svg></Task>
      <Task className="w-[37px]" bar="w-[30px] border-r-[6px] border-[#6fb0e6] bg-[#0078d7]"><svg width="18" height="17" viewBox="0 0 18 17"><circle cx="9.500" cy="8.500" r="8.300" fill="#ed6c47" /><path d="M9.500.2a8.300 8.300 0 0 1 8.300 8.300H9.500z" fill="#ff9d79" /><path d="M9.500 8.500h8.300a8.300 8.300 0 0 1-16 3z" fill="#c43e1c" opacity=".6" /><path d="M0 3.500h9v10H0z" fill="#b73518" /><text x="4.500" y="11.700" textAnchor="middle" fontFamily="Inter, sans-serif" fontSize="8.500" fontWeight="700" fill="#fff">P</text></svg></Task>
      <Task className="w-[36px]" bar="w-[30px] bg-[#0078d7]"><svg width="16" height="16" viewBox="0 0 16 16"><rect width="16" height="16" rx="2" fill="#08231c" /><path d="M4 3.500h2.500v2.500H4zM9.500 3.500H12v2.500H9.500zM4 10h2.500v2.500H4zM9.500 10H12v2.500H9.500zM6.700 6.700h2.600v2.600H6.700z" fill="#8bd9b2" /><path d="m5 5 6 6M11 5l-6 6" stroke="#8bd9b2" /></svg></Task>
      <Task className="w-[37px]" bar="w-[30px] border-r-[6px] border-[#6fb0e6] bg-[#0078d7]"><svg width="16" height="16" viewBox="0 0 16 16"><rect width="16" height="16" rx="2" fill="#b30b00" /><path d="M3 12c3-1 5-5 5-8 0-1-1-1-1 0 0 4 3 6 6 6 1-1-7-1-9 1-1 1-1 2 0 1" fill="none" stroke="#fff" strokeWidth="1.100" /></svg></Task>
      <Task className="w-[35px] bg-[#ededed]" bar="w-[35px] bg-[#0078d7]"><PaletteIcon className="h-[18px] w-[18px]" /></Task>
      <div className="ml-auto flex items-start text-[#222]">
        <svg className="mt-[12px]" width="10" height="7" viewBox="0 0 10 7"><path d="m.5 6 4.500-5 4.500 5" fill="none" stroke="currentColor" /></svg>
        <svg className="ml-[9px] mt-[9px]" width="9" height="12" viewBox="0 0 9 12"><path d="M1.500 3.500h4.500v5H1.500zM6 5l2.500-1v4L6 7M1.500 1.500q3-2 5 0M1.500 10.500q3 2 5 0" fill="none" stroke="currentColor" strokeWidth=".9" /></svg>
        <svg className="ml-[9px] mt-[9px]" width="9" height="12" viewBox="0 0 9 12"><rect x="2" y="0" width="5" height="8" rx="2.500" fill="currentColor" /><path d="M.5 6q0 4 4 4t4-4M4.500 10v2M2 11.500h5" fill="none" stroke="currentColor" /></svg>
        <svg className="ml-[7px] mt-[10px]" width="13" height="10" viewBox="0 0 13 10"><path d="M4.500 3.500h7v5h-7z" fill="#777" stroke="currentColor" /><path d="M12.500 5v2M1 1v3h3V1M2.500 4v2h2" fill="none" stroke="currentColor" /></svg>
        <svg className="ml-[5px] mt-[9px]" width="13" height="12" viewBox="0 0 13 12"><path d="M.5 4h2L6 1v10L2.500 8h-2zM8 4q1.500 2 0 4M9.500 2.500q3 3.500 0 7M11 1q4 5 0 10" fill="none" stroke="currentColor" strokeWidth=".9" /></svg>
        <svg className="ml-[5px] mt-[9px]" width="13" height="12" viewBox="0 0 13 12"><path d="M4 2.500h8.500v6H3V5M8 9v2M5 11.500h6M.5.5h3v3h-3z" fill="none" stroke="currentColor" /></svg>
        <svg className="ml-[8px] mt-[9px]" width="13" height="12" viewBox="0 0 13 12"><path d="m4 8 5-7 2 1-4 6-3 2zM5 6Q0 7 1 10t5 0M8 8q3-4 4-2t-3 2" fill="none" stroke="currentColor" /></svg>
        <div className="ml-[9px] flex w-[42px] flex-col items-center text-[10px] leading-[13px]"><div className="mt-px"><Fit w={19}>11:21</Fit></div><Fit w={40}>26.03.2021</Fit></div>
        <svg className="ml-[12px] mt-[8px]" width="13" height="13" viewBox="0 0 13 13"><path d="M.5 1h12v9H8l-2 2.500L4.500 10h-4z" fill="none" stroke="currentColor" /></svg>
        <i className="ml-[15px] mr-[2px] h-[36px] w-px bg-[#aaa]" />
      </div>
    </div>
  );
}

function Paint() {
  return (
    <div className="flex h-[806px] flex-col bg-[#f0f0f0] font-['Noto_Sans',sans-serif]">
      <TitleBar />
      <TabRow />
      <Ribbon />
      <div className="flex h-[636px]">
        <div className="w-[1422px] border-l-[4px] border-t-[5px] border-[#c9d3e3]"><Canvas /></div>
        <div className="flex w-[12px] flex-col items-center pb-px">
          <svg className="mt-[4px]" width="6" height="5" viewBox="0 0 6 5"><path d="m.5 4.500 2.500-3 2.500 3" fill="none" stroke="#444" strokeWidth="1.300" /></svg>
          <div className="mt-[5px] h-[114px] w-[11px] bg-[#cdcdcd]" />
          <svg className="mb-px mt-auto" width="6" height="5" viewBox="0 0 6 5"><path d="m.5 .5 2.500 3 2.500-3" fill="none" stroke="#444" strokeWidth="1.300" /></svg>
        </div>
      </div>
      <div className="flex h-[14px] items-center">
        <svg className="ml-[4px]" width="4" height="7" viewBox="0 0 4 7"><path d="m3.500 .5-3 3 3 3" fill="none" stroke="#444" strokeWidth="1.300" /></svg>
        <div className="ml-[5px] h-[11px] w-[1087px] bg-[#cdcdcd]" />
        <svg className="ml-auto mr-[17px]" width="4" height="7" viewBox="0 0 4 7"><path d="m.5 .5 3 3-3 3" fill="none" stroke="#444" strokeWidth="1.300" /></svg>
      </div>
      <StatusBar />
      <Taskbar />
    </div>
  );
}

/* ---------- Side pods ---------- */

function PodHeader({ title, w, lastW, extra }) {
  return (
    <div className="flex h-[37px] shrink-0 items-center pl-[13px] pr-[10px] text-[12.500px] font-semibold tracking-[1px] text-[#6e6e6e]">
      <Fit w={w}>{title}</Fit>
      {extra && <span className="ml-[9px]"><Fit w={lastW}>{extra}</Fit></span>}
      <span className="ml-auto"><PodIcon /></span>
    </div>
  );
}

function GroupRow({ open, muted, w, h, children }) {
  return (
    <div className={"flex items-center bg-[#f5f5f5] pb-[2px] pl-[15px] text-[14px] font-semibold " + h + (muted ? " text-[#b5b5b5]" : " text-[#4b4b4b]")}>
      <svg width="13" height="13" viewBox="0 0 13 13" className={"text-[#6b6b6b] " + (open ? "" : "-rotate-90")}><path d="m1 4 5.500 5.500L12 4" fill="none" stroke="currentColor" strokeWidth="2.200" /></svg>
      <span className="ml-[12px]"><Fit w={w}>{children}</Fit></span>
    </div>
  );
}

function Globe() {
  return (
    <svg width="21" height="21" viewBox="0 0 21 21" fill="none" stroke="#6e6e6e" strokeWidth="1.200">
      <circle cx="10.500" cy="10.500" r="9.700" strokeWidth="1.500" /><ellipse cx="10.500" cy="10.500" rx="5" ry="9.700" /><path d="M10.500 1v19M1 10.500h19M2.500 6h16M2.500 15h16" />
    </svg>
  );
}

function Person({ name, w, guest, globe, h = "h-[39px]" }) {
  return (
    <div className={"flex shrink-0 items-center border-t border-[#dedede] bg-[#eaeaea] pb-[2px] pl-[38px] pr-[11px] text-[14px] text-[#4b4b4b] " + h}>
      <Fit w={w}>{name}</Fit>
      {guest && <span className="ml-[5px] italic text-[#6e6e6e]"><Fit w={40}>Misafir</Fit></span>}
      {globe && <span className="ml-auto"><Globe /></span>}
    </div>
  );
}

function Arrow({ className }) {
  return <svg width="10" height="5" viewBox="0 0 10 5" className={className}><path d="M0 0h10L5 5z" fill="currentColor" /></svg>;
}

function Message({ className, who = true, children }) {
  return (
    <div className={"shrink-0 rounded-[5px] bg-[#eaeaea] pl-[10px] pt-[9px] text-[14px] leading-[22px] text-[#4b4b4b] " + className}>
      {who && <b className="font-semibold"><Fit w={92}>ADEM ÇAPAN:</Fit></b>}
      {children}
    </div>
  );
}

function Sidebar() {
  return (
    <div className="flex w-[471px] flex-col gap-[10px]">
      <div className="flex h-[312px] flex-col bg-[#f5f5f5]">
        <PodHeader title="VİDEO" w={42} />
        <div className="mt-[121px] pl-[180px] text-[16.500px] italic leading-[34px] text-[#757575]"><Fit w={112}>Video yayını yok</Fit></div>
      </div>
      <div className="flex h-[408px] flex-col overflow-hidden bg-[#f5f5f5]">
        <PodHeader title="KATILIMCILAR" w={93} extra="(8)" lastW={19} />
        <div className="flex min-h-0 flex-1">
          <div className="flex w-[450px] flex-col overflow-hidden border-t border-[#e6e6e6]">
            <GroupRow open w={130} h="h-[38px] shrink-0">Toplantı Sahipleri (1)</GroupRow>
            <div className="flex h-[39px] shrink-0 items-center border-t border-[#dedede] bg-[#eaeaea] pb-[2px] pl-[38px] pr-[15px] text-[14px] text-[#4b4b4b]">
              <Fit w={68}>Egitmen 24</Fit>
              <svg className="ml-[9px]" width="13" height="20" viewBox="0 0 13 20" fill="none" stroke="#3d3d3d" strokeWidth="2"><path d="M.5 7q2 3 0 6M4 4q4.500 6 0 12M7.500 1q8 9 0 18" /></svg>
              <svg className="ml-auto" width="12" height="20" viewBox="0 0 12 20"><rect x="3" y="0" width="6.500" height="14" rx="3.200" fill="#707070" /><path d="M.7 10v1.500Q1 16 6 16t5.400-4.500V10M6 16v4" fill="none" stroke="#707070" strokeWidth="1.300" /></svg>
            </div>
            <GroupRow muted w={86} h="h-[38px] shrink-0">Sunucular (0)</GroupRow>
            <div className="ml-[3px] h-px shrink-0 bg-[#e6e6e6]" />
            <GroupRow open w={93} h="h-[38px] shrink-0">Katılımcılar (7)</GroupRow>
            <Person name="ABDOURAOUF MSA" w={123} globe />
            <Person name="ADEM ÇAPAN" w={85} guest globe />
            <Person name="Ahmet Taha Mücasiroğlu" w={151} guest h="h-[38px]" />
            <Person name="ENES SÖNMEZ" w={92} guest globe />
            <Person name="irem sena çelik" w={90} guest />
            <Person name="OĞUZ KAAN BAYDERE" w={138} />
          </div>
          <div className="flex w-[21px] flex-col items-center bg-[#f0f0f0]">
            <Arrow className="mt-[9px] rotate-180 text-[#a3a3a3]" />
            <div className="mt-[7px] h-[287px] w-[17px] bg-[#c1c1c1]" />
            <Arrow className="mb-[9px] mt-auto text-[#444]" />
          </div>
        </div>
      </div>
      <div className="flex h-[270px] flex-col overflow-hidden bg-[#f5f5f5]">
        <PodHeader title="SOHBET" w={53} />
        <div className="ml-[22px] mt-[12px] h-[30px] w-[42px] shrink-0 border-b-2 border-[#222] text-[14px] leading-[24px] text-[#323232]"><Fit w={42}>Herkes</Fit></div>
        <div className="flex h-[191px]">
          <div className="flex h-[191px] w-[450px] flex-col items-start justify-end gap-[4px] overflow-hidden border-t border-[#e6e6e6] pb-[5px] pl-[13px]">
            <Message who={false} className="h-[59px] w-[360px]">
              <div className="h-[22px]"><Fit w={275}>yazmayi dusunuyorum o yuzden windows da</Fit></div>
              <div className="h-[22px]"><Fit w={178}>calismayabilir sorun olur mu?</Fit></div>
            </Message>
            <Message className="h-[37px] w-[286px]"><span className="ml-[4px]"><Fit w={166}>anladım hocam teşekkürler</Fit></span></Message>
            <Message className="h-[59px] w-[360px]">
              <span className="ml-[4px]"><Fit w={239}>minimum row ve col bilgileri koordinatı</Fit></span>
              <div><Fit w={209}>mı ifade ediyor yoksa boyutu  mu?</Fit></div>
            </Message>
            <Message className="h-[37px] w-[187px]"><span className="ml-[4px]"><Fit w={68}>teşekkürler</Fit></span></Message>
          </div>
          <div className="flex w-[21px] flex-col items-center bg-[#f0f0f0]">
            <Arrow className="mt-[10px] rotate-180 text-[#444]" />
            <div className="mt-[71px] h-[83px] w-[17px] bg-[#c1c1c1]" />
            <Arrow className="mt-[7px] text-[#a3a3a3]" />
          </div>
        </div>
      </div>
    </div>
  );
}

/* ---------- Player ---------- */

function Skip({ back }) {
  return (
    <svg width="22" height="24" viewBox="0 0 22 24">
      <g transform={back ? "translate(22 0) scale(-1 1)" : ""} fill="none" stroke="#a5a5a5" strokeWidth="1.500">
        <path d="M9.500 3A9.300 9.300 0 0 0 6.500 20.500M13.500 3.500A9.300 9.300 0 0 1 15.500 20.500M8.500 21.500q2.500.700 5 0" />
        <path d="M6 .5h5.500V6Z" fill="#a5a5a5" stroke="none" />
      </g>
      <text x="11" y="16.500" textAnchor="middle" fontFamily="'Open Sans', sans-serif" fontSize="11.500" fontWeight="600" fill="#a5a5a5">15</text>
    </svg>
  );
}

function Player() {
  return (
    <div className="flex h-[60px] items-center border-b border-[#140c0e] bg-[#1e1e1e]">
      <div className="flex h-full w-[70px] items-center border-r-2 border-[#363636] pl-[25px]">
        <svg width="18" height="16"><path d="M0 1h18M0 8h18M0 15h18" stroke="#a5a5a5" strokeWidth="2" /></svg>
      </div>
      <div className="ml-[20px] flex items-center">
        <Skip back />
        <div className="relative ml-[8px] flex h-[42px] w-[42px] items-center justify-center rounded-[5px] border border-[#1473e6] bg-[#393939]">
          <svg className="mr-[2px]" width="14" height="18"><path d="M0 0h5v18H0zM9 0h5v18H9z" fill="#eee" /></svg>
          <div className="absolute -top-[42px] -left-[19px] flex h-[31px] w-[77px] items-center justify-center rounded-[5px] bg-[#747474] text-[14px] font-semibold text-white">
            <Fit w={52}>Duraklat</Fit>
            <svg className="absolute -bottom-[4px] left-[33px]" width="10" height="5"><path d="M0 0h10L5 5z" fill="#747474" /></svg>
          </div>
        </div>
        <span className="ml-[7px]"><Skip /></span>
      </div>
      <div className="ml-[27px] h-[10px] w-[1370px] overflow-hidden rounded-[5px] bg-[#3f3f3f]"><div className="h-full w-[1327px] bg-[#0d86ff]" /></div>
      <div className="ml-[21px] font-['Liberation_Serif',serif] text-[15.500px] text-[#d0d0d0]"><Fit w={112}>01:20:00/01:22:34</Fit></div>
      <svg className="ml-[34px]" width="22" height="20" viewBox="0 0 22 20"><path d="M0 6h4l6-5v18l-6-5H0z" fill="#a5a5a5" /><path d="M12.500 6.500q3 3.500 0 7M15.500 4q5 6 0 12M18.500 1.500q6 8 0 17" fill="none" stroke="#a5a5a5" strokeWidth="1.500" /></svg>
      <div className="ml-auto flex h-full w-[63px] items-center justify-center border-l-2 border-[#363636]"><PodIcon className="text-[#868686]" /></div>
      <div className="flex h-full w-[62px] items-center justify-center border-l-2 border-[#363636]">
        <svg width="20" height="20" viewBox="0 0 20 20"><circle cx="10" cy="10" r="10" fill="#a8a8a8" /><path d="M8.500 3.500h3.200v3H8.500zM7 8h4.700v6.500H13V16H7v-1.500h1.500v-5H7z" fill="#1e1e1e" /></svg>
      </div>
    </div>
  );
}

export default function App() {
  return (
    <div className="flex h-[1080px] w-[1920px] flex-col overflow-hidden bg-[#e1e1e1] font-['Open_Sans',sans-serif]">
      <div className="h-px shrink-0 pl-[809px]"><div className="h-px w-[60px] bg-[#1c86e0]" /></div>
      <div className="flex h-[1010px] gap-[7px] pl-[4px]">
        <div className="w-[1434px] bg-black">
          <div className="flex h-[38px] items-center bg-[#f5f5f5] pb-px pl-[12px] pr-[10px] text-[12.500px] font-semibold tracking-[1px] text-[#6e6e6e]">
            <Fit w={49}>PAYLAŞ</Fit><span className="ml-[10px]"><Fit w={89}>- EGİTMEN 24</Fit></span>
            <span className="ml-auto"><PodIcon /></span>
          </div>
          <div className="h-[83px]" />
          <Paint />
        </div>
        <Sidebar />
      </div>
      <div className="mt-[7px] h-[2px] bg-[#f2f2f2]" />
      <Player />
    </div>
  );
}
